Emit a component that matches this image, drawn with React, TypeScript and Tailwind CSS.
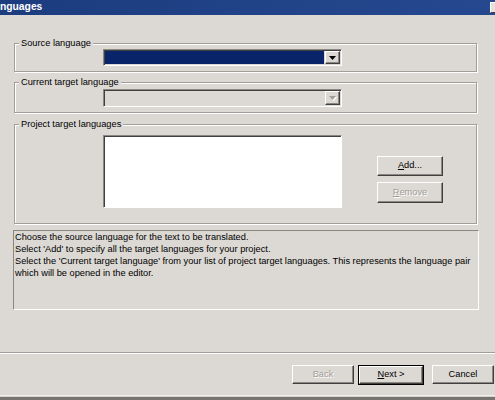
import React from "react"

const raised =
    "border border-t-white border-l-white border-b-[#404040] border-r-[#404040] shadow-[inset_-1px_-1px_0_#8a8783] bg-[#dcd9d4]"
const sunken =
    "border border-t-[#8a8783] border-l-[#8a8783] border-b-white border-r-white shadow-[inset_1px_1px_0_#404040]"

const Arrow = ({ disabled }: { disabled?: boolean }) => (
    <div className={`${raised} flex h-full w-[15px] items-center justify-center`}>
        <svg width="7" height="4" viewBox="0 0 7 4" className={disabled ? "drop-shadow-[1px_1px_0_#fff]" : ""}>
            <path d="M0 0h7L3.5 4z" fill={disabled ? "#a19d98" : "#000"} />
        </svg>
    </div>
)

const Combo = ({ active, disabled }: { active?: boolean; disabled?: boolean }) => (
    <div className={`${sunken} flex w-[239px] p-[1px] ${active ? "h-[17px]" : "h-[18px]"}`}>
        <div className={`flex-1 ${active ? "mr-[1px] bg-[#0a246a]" : disabled ? "bg-[#dcd9d4]" : "bg-white"}`} />
        <Arrow disabled={disabled} />
    </div>
)

const Group = ({ label, className, children }: { label: string; className: string; children?: React.ReactNode }) => (
    <div
        className={`relative ml-[14px] w-[463px] border border-[#a19e99] shadow-[inset_1px_1px_0_#fff,1px_1px_0_#fff] ${className}`}
    >
        <span className="absolute -top-[7px] left-[4px] bg-[#dcd9d4] px-[2px] leading-[12px]">{label}</span>
        {children}
    </div>
)

const Button = ({
    children,
    disabled,
    primary,
    className = ""
}: {
    children: React.ReactNode
    disabled?: boolean
    primary?: boolean
    className?: string
}) => (
    <div className={`${primary ? "border border-black" : ""} ${className}`}>
        <div
            className={`${raised} flex h-full w-full items-center justify-center leading-none ${
                disabled ? "text-[#a19d98] [text-shadow:1px_1px_0_#fff]" : "text-black"
            }`}
        >
            {children}
        </div>
    </div>
)

export default function App() {
    return (
        <div className="relative flex h-[400px] w-[495px] flex-col overflow-hidden bg-[#dcd9d4] font-['Liberation_Sans',Arial,sans-serif] text-[9.25px] text-black">
            {/* title bar (window cropped at the left) */}
            <div className="flex h-[15px] items-center overflow-hidden bg-gradient-to-r from-[#1b3c7e] to-[#26488f]">
                <span className="text-[10.3px] font-bold leading-none text-white">nguages</span>
                <div className="ml-auto -mr-[9px] h-[11px] w-[14px] border border-t-white border-l-white border-b-[#404040] border-r-[#404040] bg-[#e4e2de]" />
            </div>

            <Group label="Source language" className="mt-[28px] h-[29px] pl-[88px] pt-[5px]">
                <Combo active />
            </Group>

            <Group label="Current target language" className="mt-[10px] h-[31px] pl-[88px] pt-[6px]">
                <Combo disabled />
            </Group>

            <Group label="Project target languages" className="mt-[11px] flex h-[100px] pl-[88px] pt-[10px]">
                <div className={`${sunken} h-[73px] w-[239px] bg-white`} />
                <div className="ml-[35px] mt-[21px] flex flex-col gap-[6px]">
                    <Button className="h-[20px] w-[66px]">
                        <span>
                            <u>A</u>dd...
                        </span>
                    </Button>
                    <Button disabled className="h-[21px] w-[66px]">
                        <span>
                            <u>R</u>emove
                        </span>
                    </Button>
                </div>
            </Group>

            {/* info text */}
            <div className="ml-[13px] mt-[6px] h-[80px] w-[466px] border border-t-[#8a8783] border-l-[#8a8783] border-b-white border-r-white pl-[1px] pt-[1px] leading-[11.9px]">
                <p>Choose the source language for the text to be translated.</p>
                <p>Select 'Add' to specify all the target languages for your project.</p>
                <p>
                    Select the 'Current target language' from your list of project target languages. This represents the language pair
                    which will be opened in the editor.
                </p>
            </div>

            {/* separator */}
            <div className="mt-[42px] h-[2px] border-t border-[#a19e99] border-b border-b-white" />

            {/* bottom buttons */}
            <div className="mt-[11px] flex pl-[292px]">
                <Button disabled className="h-[19px] w-[62px]">
                    Back
                </Button>
                <Button primary className="ml-[4px] h-[20px] w-[66px]">
                    <span>
                        <u>N</u>ext &gt;
                    </span>
                </Button>
                <Button className="ml-[8px] h-[19px] w-[62px]">Cancel</Button>
            </div>

            <div className="mt-auto h-[5px] border-t border-t-[#f2f0ed] bg-[#d4d0cb] shadow-[inset_0_-3px_0_#77736e]" />
        </div>
    )
}
